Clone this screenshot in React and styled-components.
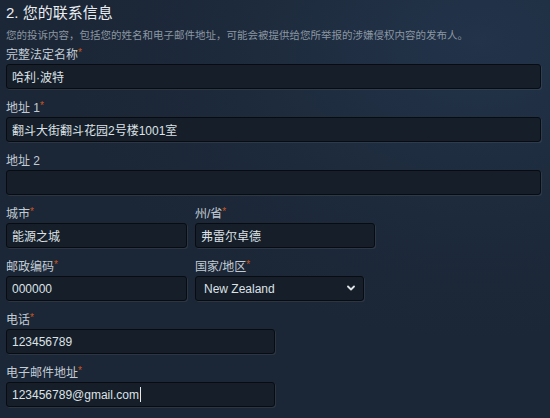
import React from 'react';
import styled, { createGlobalStyle, css } from 'styled-components';

const GlobalStyle = createGlobalStyle`
  html, body {
    margin: 0;
    padding: 0;
  }
  body {
    width: 550px;
    height: 418px;
    overflow: hidden;
    background: radial-gradient(ellipse 420px 300px at 480px 40px, #22334a 0%, #1d2a3b 60%, #1b2636 100%);
    font-family: 'Liberation Sans', 'Noto Sans CJK SC', sans-serif;
  }
`;

const fields = [
  { label: '完整法定名称', required: true, value: '哈利·波特', width: '535px' },
  { label: '地址 1', required: true, value: '翻斗大街翻斗花园2号楼1001室', width: '535px' },
  { label: '地址 2', required: false, value: '', width: '535px' },
];

function ChevronIcon() {
  return (
    <svg width="8" height="6" viewBox="0 0 8 6">
      <polyline
        points="1,1.5 4,4.5 7,1.5"
        fill="none"
        stroke="#dfe3e6"
        strokeWidth="1.8"
        strokeLinecap="round"
        strokeLinejoin="round"
      />
    </svg>
  );
}

function Field({ label, required, value, width }) {
  return (
    <FieldBox>
      <Label>
        {label}
        {required && <Star>*</Star>}
      </Label>
      <TextInput type="text" defaultValue={value} $width={width} />
    </FieldBox>
  );
}

// the focused field, drawn with its text caret so it shows in a still picture
function ActiveField({ label, value, width }) {
  return (
    <FieldBox>
      <Label>
        {label}
        <Star>*</Star>
      </Label>
      <ActiveBox $width={width}>
        {value}
        <Caret />
      </ActiveBox>
    </FieldBox>
  );
}

function App() {
  return (
    <Wrapper>
      <GlobalStyle />
      <Title>2. 您的联系信息</Title>
      <Desc>
        您的投诉内容，包括您的姓名和电子邮件地址，可能会被提供给您所举报的涉嫌侵权内容的发布人。
      </Desc>
      {fields.map(f => (
        <Field key={f.label} {...f} />
      ))}
      <Pair>
        <Field label="城市" required value="能源之城" width="181px" />
        <Field label="州/省" required value="弗雷尔卓德" width="180px" />
      </Pair>
      <Pair>
        <Field label="邮政编码" required value="000000" width="181px" />
        <FieldBox>
          <Label>
            国家/地区<Star>*</Star>
          </Label>
          <SelectWrap>
            <Select defaultValue="nz">
              <option value="cn">China</option>
              <option value="nz">New Zealand</option>
              <option value="us">United States</option>
            </Select>
            <SelectArrow>
              <ChevronIcon />
            </SelectArrow>
          </SelectWrap>
        </FieldBox>
      </Pair>
      <Field label="电话" required value="123456789" width="269px" />
      <ActiveField label="电子邮件地址" value="123456789@gmail.com" width="269px" />
    </Wrapper>
  );
}

export default App;

const boxStyle = css`
  box-sizing: border-box;
  height: 25px;
  background-color: #151e29;
  color: #dde2e6;
  font-family: 'Liberation Sans', 'Noto Sans CJK SC', sans-serif;
  font-size: 12px;
  border: 1px solid #080c11;
  border-radius: 3px;
  box-shadow: 1px 1px 0 rgba(255, 255, 255, 0.07);
  outline: none;
`;

const Wrapper = styled.div`
  padding: 2px 6px 0;
  display: flex;
  flex-direction: column;
`;

const Title = styled.h2`
  margin: 0;
  font-size: 15px;
  line-height: 22px;
  font-weight: normal;
  color: #e9edf0;
`;

const Desc = styled.p`
  margin: 3px 0 3px;
  font-size: 10.5px;
  line-height: 16px;
  color: #8b97a3;
  white-space: nowrap;
`;

const FieldBox = styled.div`
  display: flex;
  flex-direction: column;
  margin-bottom: 10px;
`;

const Label = styled.label`
  font-size: 12px;
  line-height: 18px;
  color: #c2ccd5;
`;

const Star = styled.span`
  color: #c8561f;
  font-size: 10px;
  vertical-align: top;
  line-height: 13px;
`;

const TextInput = styled.input`
  ${boxStyle}
  width: ${props => props.$width};
  padding: 0 5px;
`;

const ActiveBox = styled.div`
  ${boxStyle}
  width: ${props => props.$width};
  padding: 0 5px;
  display: flex;
  align-items: center;
`;

const Caret = styled.span`
  display: inline-block;
  width: 1px;
  height: 15px;
  margin-left: 1px;
  background-color: #e6e9ec;
`;

const Pair = styled.div`
  display: grid;
  grid-template-columns: 181px auto;
  column-gap: 8px;
  justify-content: start;
`;

const SelectWrap = styled.div`
  position: relative;
  width: 169px;
`;

const Select = styled.select`
  ${boxStyle}
  width: 169px;
  padding: 0 20px 0 8px;
  appearance: none;
`;

const SelectArrow = styled.span`
  position: absolute;
  right: 9px;
  top: 9px;
  display: flex;
  pointer-events: none;
`;
